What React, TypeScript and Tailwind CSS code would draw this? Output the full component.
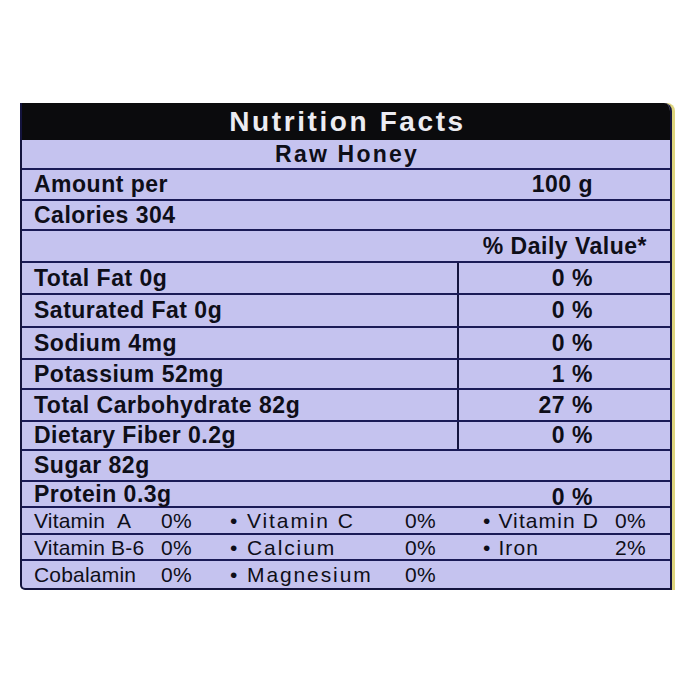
import React from 'react';

const NUTRIENTS = [
  { label: 'Total Fat 0g', value: '0 %', h: 'h-[32px]' },
  { label: 'Saturated Fat 0g', value: '0 %', h: 'h-[33px]' },
  { label: 'Sodium 4mg', value: '0 %', h: 'h-[32px]' },
  { label: 'Potassium 52mg', value: '1 %', h: 'h-[30px]' },
  { label: 'Total Carbohydrate 82g', value: '27 %', h: 'h-[32px]' },
  { label: 'Dietary Fiber 0.2g', value: '0 %', h: 'h-[29px]' },
];

const VITAMINS = [
  [
    { name: 'Vitamin\u00a0\u00a0A', pct: '0%' },
    { name: '• Vitamin C', pct: '0%' },
    { name: '• Vitamin D', pct: '0%' },
  ],
  [
    { name: 'Vitamin B-6', pct: '0%' },
    { name: '• Calcium', pct: '0%' },
    { name: '• Iron', pct: '2%' },
  ],
  [
    { name: 'Cobalamin', pct: '0%' },
    { name: '• Magnesium', pct: '0%' },
    null,
  ],
];

const ROW_H = ['h-[27px]', 'h-[26px]', 'h-[27px]'];

export default function App() {
  return (
    <div className="min-h-[700px] w-[690px] bg-white pt-[103px] font-['Liberation_Sans',Arial,sans-serif] text-[#0e0e18]">
      <div className="ml-[20px] w-[652px] overflow-hidden rounded-tr-[8px] rounded-bl-[5px] border-x-2 border-b-2 border-[#14143e] bg-[#c5c3ef] shadow-[3px_0_0_#ddd47e]">
        {/* Header */}
        <div className="flex h-[37px] items-center justify-center bg-[#0b0b0d]">
          <span className="pl-[3px] text-[28px] font-bold leading-none tracking-[2.6px] text-[#ececf2]">
            Nutrition Facts
          </span>
        </div>

        <div className="flex h-[30px] items-center justify-center border-b-2 border-[#1a1a56]">
          <span className="pl-[2px] text-[23px] font-bold leading-none tracking-[2.2px]">Raw Honey</span>
        </div>

        <div className="flex h-[31px] items-center justify-between border-b-2 border-[#1a1a56] pl-[12px] pr-[77px] text-[23px] font-bold leading-none tracking-[0.5px]">
          <span>Amount per</span>
          <span>100 g</span>
        </div>

        <div className="flex h-[30px] items-center border-b-2 border-[#1a1a56] pl-[12px] text-[23px] font-bold leading-none tracking-[0.5px]">
          Calories 304
        </div>

        <div className="flex h-[32px] items-center justify-end border-b-2 border-[#1a1a56] pr-[23px] text-[23px] font-bold leading-none tracking-[0.5px]">
          % Daily Value*
        </div>

        {NUTRIENTS.map(n => (
          <div key={n.label} className={`flex ${n.h} border-b-2 border-[#1a1a56] text-[23px] font-bold leading-none tracking-[0.5px]`}>
            <div className="flex w-[435px] items-center pl-[12px]">{n.label}</div>
            <div className="flex flex-1 items-center justify-end border-l-2 border-[#14143e] pr-[77px]">{n.value}</div>
          </div>
        ))}

        <div className="flex h-[31px] items-center border-b-2 border-[#1a1a56] pl-[12px] text-[23px] font-bold leading-none tracking-[0.5px]">
          Sugar 82g
        </div>

        <div className="flex h-[26px] items-center justify-between border-b-2 border-[#1a1a56] pl-[12px] pr-[77px] text-[23px] font-bold leading-none tracking-[0.5px]">
          <span>Protein 0.3g</span>
          <span className="pt-[6px]">0 %</span>
        </div>

        {VITAMINS.map((row, i) => (
          <div
            key={i}
            className={`grid ${ROW_H[i]} grid-cols-[208px_252px_1fr] items-center text-[21px] leading-none ${i < 2 ? 'border-b-2 border-[#1a1a56]' : ''}`}
          >
            {row.map((v, j) =>
              v ? (
                <div
                  key={j}
                  className={`flex items-center ${j === 0 ? 'pl-[12px]' : j === 1 ? 'pl-0' : 'pl-[1px] justify-between pr-[24px]'}`}
                >
                  <span
                    className={
                      j === 0
                        ? 'w-[127px] tracking-[0.2px]'
                        : j === 1
                          ? 'w-[175px] tracking-[1.9px]'
                          : 'tracking-[1.1px]'
                    }
                  >
                    {v.name}
                  </span>
                  <span className="tracking-[0.3px]">{v.pct}</span>
                </div>
              ) : (
                <div key={j} />
              )
            )}
          </div>
        ))}
      </div>
    </div>
  );
}
